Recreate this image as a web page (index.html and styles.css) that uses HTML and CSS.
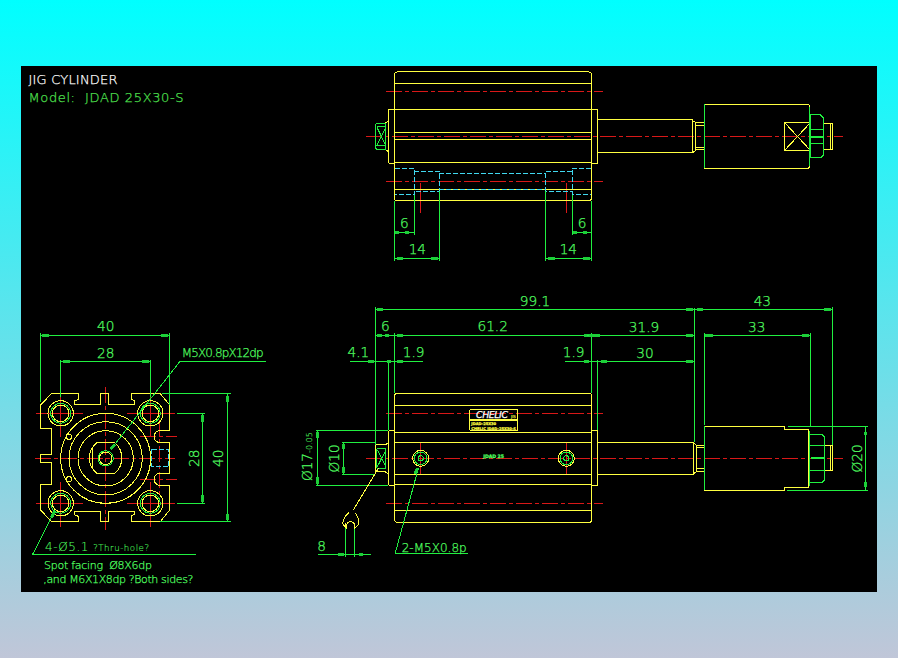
FILE: index.html
```html
<!DOCTYPE html>
<html lang="en">
<head>
<meta charset="utf-8">
<title>JIG CYLINDER</title>
<link rel="stylesheet" href="styles.css">
</head>
<body>
<main class="sheet">
<svg class="drawing" viewBox="21 66 856 526" width="856" height="526" xmlns="http://www.w3.org/2000/svg">
<defs>
  <g id="bolt">
    <circle class="y" r="38"/>
    <circle class="g" r="30"/>
    <circle class="y" r="25"/>
  </g>
</defs>

<text class="title w" x="28.5" y="83.5" textLength="89">JIG CYLINDER</text>
<text class="title g-t" x="28.5" y="101.5" textLength="155">Model:  JDAD 25X30-S</text>

<!-- top view, cylinder body -->
<g transform="translate(360 66) scale(.33333)">
  <path class="r dash" d="M78,76H728M78,346H728M18,212H1448"/>
  <path class="r" d="M181,350V440M619,350V440"/>
  <path class="y" d="M104,25Q104,18 110,18H688Q694,18 694,25V397Q694,404 688,404H110Q104,404 104,397ZM104,52H694M104,132H694M104,199H694M104,220H694M104,290H694M104,370H694"/>
  <path class="y" d="M104,130H91Q85,130 85,136V286Q85,292 91,292H104M694,130H713V292H694M75,172L85,165M75,250L85,257"/>
  <path class="g" d="M50,172H78V250H50L46,246V176ZM50,182H78M50,240H78M50,182L78,240M78,182L50,240"/>
  <path class="c dash2" d="M104,307H163V386H104M694,307H637V386H694M163,316H238V376H163M637,316H558V376H637M238,322H558M238,370H558"/>
  <path class="g" d="M104,404V585M163,386V508M238,376V585M558,376V585M637,386V508M694,404V585M104,500H163M104,577H238M558,577H694M637,500H694"/>
  <path class="g tick" d="M104,500H118M135,500H148M112,577H128M213,577H235M565,577H585M670,577H690M640,500H652M668,500H680"/>
  <text class="dim g-t" x="133" y="487">6</text>
  <text class="dim g-t" x="172" y="563">14</text>
  <text class="dim g-t" x="666" y="487">6</text>
  <text class="dim g-t" x="625" y="563">14</text>
</g>

<!-- top view, rod end -->
<g transform="translate(600 90) scale(.33333)">
  <path class="y" d="M-7,90H278V188H-7M278,92L288,98H314M278,188L288,180H314M288,98V180M288,107H314M288,172H314"/>
  <path class="y" d="M314,43H622Q628,43 628,50V228Q628,235 622,235H314ZM553,97H632V182H553ZM553,97L632,182M632,97L553,182"/>
  <path class="g" d="M314,43V235M628,50V228"/>
  <path class="g" d="M632,75H662L672,85V193L662,203H632ZM632,118H672M632,162H672"/>
  <path class="g thick" d="M632,140H672"/>
  <path class="y" d="M672,100H697V178H672M692,100V178"/>
</g>

<!-- end view -->
<g transform="translate(20 310) scale(.33333)">
  <path class="r dash" d="M45,445H465M257,230V660M420,330V560M360,380H470M360,508H470"/>
  <path class="r" d="M47,310H190M122,240V380M320,310H465M391,240V380M47,580H190M122,515V650M320,580H465M391,515V650"/>
  <path class="y" d="M62,285L95,250H177V268L165,272V283H243V250H267V283H345V272L335,268V250H420L449,285V362H420A18,18 0 0 0 420,398H449V490H420A18,18 0 0 0 420,526H449V600L420,636H335V618L345,612V605H267V636H243V605H165V615L177,620V636H95L62,600V525H95V457H62V435H95V355H62Z"/>
  <use href="#bolt" x="122" y="310"/>
  <use href="#bolt" x="391" y="310"/>
  <use href="#bolt" x="122" y="580"/>
  <use href="#bolt" x="391" y="580"/>
  <circle class="y" cx="257" cy="445" r="135"/>
  <circle class="y" cx="257" cy="445" r="110"/>
  <circle class="y" cx="257" cy="445" r="83"/>
  <circle class="y" cx="147" cy="380" r="8"/>
  <circle class="y" cx="147" cy="508" r="8"/>
  <path class="y" d="M230,398H284A60,60 0 0 1 284,490H230A60,60 0 0 1 230,398ZM218,412V478"/>
  <circle class="g" cx="257" cy="445" r="23"/>
  <circle class="y" cx="257" cy="445" r="19"/>
  <path class="c dash2" d="M396,420H447V470H396Z"/>
  <path class="g" d="M61,70V275M449,70V285M122,150V260M392,150V260M61,77H449M122,154H392M425,250H632M420,636H632M623,250V636M470,310H555M470,580H555M547,310V580"/>
  <path class="g" d="M738,154H480L275,415M528,733H38L100,610"/>
  <path class="g tick" d="M66,77H88M422,77H444M130,154H150M365,154H388M623,258V275M623,612V630M547,315V335M547,555V575M272,418L284,404M94,622L104,605"/>
  <text class="dim g-t" x="257" y="64">40</text>
  <text class="dim g-t" x="257" y="143">28</text>
  <text class="dim g-t" transform="translate(536 445) rotate(-90)">28</text>
  <text class="dim g-t" transform="translate(610 445) rotate(-90)">40</text>
  <text class="label g-t" x="485" y="140" textLength="246">M5X0.8pX12dp</text>
  <text class="label g-t" x="75" y="722" textLength="312"><tspan>4-Ø5.1 </tspan><tspan class="small">?Thru-hole?</tspan></text>
  <text class="note g-t" x="72" y="778" textLength="324">Spot facing  Ø8X6dp</text>
  <text class="note g-t" x="70" y="820" textLength="450">,and M6X1X8dp ?Both sides?</text>
</g>

<!-- side view, cylinder body -->
<g transform="translate(300 290) scale(.33333)">
  <path class="r dash" d="M258,370H909M258,640H909M197,505H1630"/>
  <path class="r" d="M362,458V552M799,458V552"/>
  <path class="y" d="M284,318Q284,310 292,310H867Q875,310 875,318V689Q875,697 867,697H292Q284,697 284,689ZM284,347H875M284,427H875M284,457H875M284,553H875M284,583H875M284,662H875"/>
  <path class="y" d="M284,421H272Q265,421 265,428V580Q265,587 272,587H284M875,421H892V587H875M226,465H255L265,458M226,545H255L265,552M226,465V545"/>
  <path class="g" d="M232,475H258V535H232L229,530V480ZM232,480L258,530M258,480L232,530"/>
  <circle class="y" cx="362" cy="505" r="24"/>
  <circle class="g" cx="362" cy="505" r="19"/>
  <circle class="g" cx="362" cy="505" r="8"/>
  <circle class="y" cx="799" cy="505" r="24"/>
  <circle class="g" cx="799" cy="505" r="19"/>
  <circle class="g" cx="799" cy="505" r="8"/>
  <path class="y logo" d="M515,358H647Q653,358 653,364V416Q653,422 647,422H515Q509,422 509,416V364Q509,358 515,358Z"/>
  <path class="y thick" d="M509,389H653"/>
  <text class="logo-name w" x="528" y="385" textLength="96">CHELIC</text>
  <text class="logo-r y-t" x="633" y="385">JIS</text>
  <text class="logo-s y-t" x="514" y="405">JDAD-25X30</text>
  <text class="logo-s y-t" x="514" y="419" textLength="134">CHELIC JDAD-25X30-S</text>
  <text class="stamp g-t" x="550" y="503" textLength="62">JDAD 25</text>
  <path class="g" d="M226,50V465M265,214V421M284,130V310M875,130V310M892,210V420M226,60H1000M226,137H1000M150,214H368M795,214H1000M47,421H265M47,587H265M54,421V587M125,457H226M125,553H226M132,457V553M55,794H212M138,700V800M163,700V800"/>
  <path class="g" d="M355,535L285,792H505"/>
  <path class="y" d="M235,535L160,660M146,668Q124,690 130,705L140,715Q138,695 152,695Q166,695 163,715L174,705Q182,690 165,668M138,700V715M163,700V715"/>
  <path class="g tick" d="M232,60H250M230,137H245M255,137H268M290,137H308M852,137H870M203,214H222M262,214H272M292,214H308M852,214H868M54,425V445M54,562V582M132,462V478M132,532V548M115,794H132M178,794H190M352,535L345,552"/>
  <text class="dim g-t" x="705" y="47">99.1</text>
  <text class="dim g-t" x="256" y="122">6</text>
  <text class="dim g-t" x="578" y="122">61.2</text>
  <text class="dim g-t" x="175" y="200">4.1</text>
  <text class="dim g-t" x="341" y="200">1.9</text>
  <text class="dim g-t" x="821" y="200">1.9</text>
  <text class="dim g-t" x="65" y="782">8</text>
  <text class="dim g-t" transform="translate(116 505) rotate(-90)">Ø10</text>
  <text class="dim g-t" transform="translate(35 500) rotate(-90)">Ø17<tspan class="tol">-0.05</tspan></text>
  <text class="label g-t" x="305" y="785" textLength="195">2-M5X0.8p</text>
</g>

<!-- side view, rod end -->
<g transform="translate(590 290) scale(.33333)">
  <path class="y" d="M22,457H310V553H22M310,459L320,466H345M310,551L320,545H345M320,466V545M320,473H345M320,537H345"/>
  <path class="y" d="M345,409H583V418H657V592H583V601H345Z"/>
  <path class="g" d="M345,409V601M660,422V588"/>
  <path class="g" d="M660,433H695L705,443V568L695,578H660ZM660,467H705M660,541H705"/>
  <path class="g thick" d="M662,505H704"/>
  <path class="y" d="M705,467H727V541H705M722,467V541"/>
  <path class="g" d="M314,55V455M727,50V465M343,130V405M661,130V410M-10,60H727M-10,137H314M343,137H661M22,214H314M595,409H833M590,601H833M826,409V601"/>
  <path class="g tick" d="M288,60H308M320,60H338M702,60H722M-4,137H30M288,137H310M345,137H370M636,137H658M32,214H50M288,214H310M826,425V436M826,575V590"/>
  <text class="dim g-t" x="517" y="47">43</text>
  <text class="dim g-t" x="162" y="125">31.9</text>
  <text class="dim g-t" x="500" y="125">33</text>
  <text class="dim g-t" x="165" y="203">30</text>
  <text class="dim g-t" transform="translate(815 505) rotate(-90)">Ø20</text>
</g>
</svg>
</main>
</body>
</html>
```
FILE: styles.css
```css
html, body {
  margin: 0;
  height: 658px;
  overflow: hidden;
}
body {
  padding: 66px 0 0 21px;
  box-sizing: border-box;
  background: linear-gradient(180deg, #00ffff 0%, #c0c6d8 100%);
}
.sheet {
  width: 856px;
  height: 526px;
  background: #000;
}
.drawing {
  display: block;
}
.drawing path, .drawing circle {
  fill: none;
  stroke-width: 1px;
  vector-effect: non-scaling-stroke;
  shape-rendering: crispEdges;
}
.y { stroke: #ffff40; }
.g { stroke: #20f040; }
.r { stroke: #d81818; }
.c { stroke: #40d8f0; }
.drawing .thick { stroke-width: 2px; }
.drawing .tick { stroke-width: 3px; stroke: #1ccf38; }
.dash { stroke-dasharray: 16 3 4 3; }
.dash2 { stroke-dasharray: 5 2; }
text {
  font-family: "DejaVu Sans", "Liberation Sans", sans-serif;
  font-weight: 200;
  fill: #50ff60;
  stroke: #50ff60;
  stroke-width: .25px;
  vector-effect: non-scaling-stroke;
  white-space: pre;
}
.w { fill: #fff; stroke: #fff; }
.g-t { fill: #50ff60; }
.y-t { fill: #ffff40; stroke: #ffff40; }
.title { font-size: 13px; }
.title.g-t { fill: #4fe04f; stroke: #4fe04f; }
.dim { font-size: 41px; text-anchor: middle; }
.label { font-size: 36px; }
.note { font-size: 33px; }
.small { font-size: 26px; }
.tol { font-size: 24px; }
.logo-name { font-size: 28px; font-style: italic; }
.logo-r { font-size: 12px; }
.logo-s { font-size: 11px; font-weight: 700; }
.stamp { font-size: 14px; font-weight: 700; }
```
